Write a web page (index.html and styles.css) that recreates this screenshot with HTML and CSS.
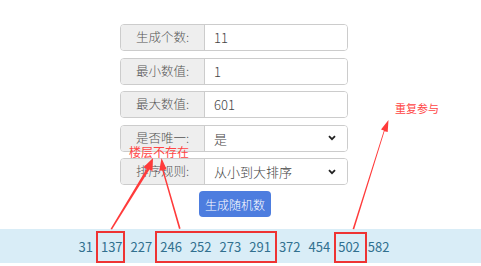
FILE: index.html
```html
<!DOCTYPE html>
<html lang="zh">
<head>
<meta charset="utf-8">
<link rel="stylesheet" href="styles.css">
</head>
<body>
<div class="page">
  <main class="form">
    <div class="group"><span class="addon">生成个数:</span><span class="field">11</span></div>
    <div class="group"><span class="addon">最小数值:</span><span class="field">1</span></div>
    <div class="group"><span class="addon">最大数值:</span><span class="field">601</span></div>
    <div class="group"><span class="addon">是否唯一:</span><span class="field select">是<svg class="chev" viewBox="0 0 8 6" width="8" height="6"><path d="M1 1.2 L4 4.2 L7 1.2" fill="none" stroke="#222" stroke-width="1.8"/></svg></span></div>
    <div class="group"><span class="addon">排序规则:</span><span class="field select">从小到大排序<svg class="chev" viewBox="0 0 8 6" width="8" height="6"><path d="M1 1.2 L4 4.2 L7 1.2" fill="none" stroke="#222" stroke-width="1.8"/></svg></span></div>
    <div class="actions"><button class="btn">生成随机数</button></div>
  </main>
  <div class="result">
    <span>31</span><span>137</span><span>227</span><span>246</span><span>252</span><span>273</span><span>291</span><span>372</span><span>454</span><span>502</span><span>582</span>
  </div>
</div>
<div class="note note-floor">楼层不存在</div>
<div class="note note-dup">重复参与</div>
<svg class="marks" width="481" height="266" viewBox="0 0 481 266">
  <g fill="none" stroke="#ee3333" stroke-width="2">
    <rect x="97" y="232" width="27" height="30"/>
    <rect x="156" y="232" width="120" height="30"/>
    <rect x="335" y="233" width="31" height="29"/>
  </g>
  <g fill="#ff3b3b">
    <polygon points="110.5,229 112,229.6 149.5,169.5 152.5,171.3 153,158 143.5,167.2 146.5,169"/>
    <polygon points="179,229 180.6,228.6 163.6,170 166.6,169.3 161.5,158 159.2,170.9 162.2,170.3"/>
    <polygon points="352.6,229 354.2,229.3 384.5,131.2 387.7,132.1 388.5,120 381,129.5 383.9,130.4"/>
  </g>
</svg>
</body>
</html>
```
FILE: styles.css
```css
* { box-sizing: border-box; }
html, body { margin: 0; padding: 0; background: #fff; }
body {
  width: 481px;
  height: 266px;
  overflow: hidden;
  position: relative;
  font-family: "Noto Sans CJK SC", "Noto Sans", sans-serif;
  font-size: 13px;
  color: #555;
}
.page { padding-top: 24px; }
.form {
  width: 228px;
  margin-left: 120px;
  display: flex;
  flex-direction: column;
  gap: 6.5px;
}
.group {
  display: flex;
  height: 27px;
  border: 1px solid #ccc;
  border-radius: 4px;
  overflow: hidden;
}
.addon {
  width: 84px;
  flex: none;
  background: #eee;
  border-right: 1px solid #ccc;
  display: flex;
  align-items: center;
  justify-content: center;
  color: #555;
  font-size: 12.5px;
  font-weight: 300;
  line-height: 1;
}
.field {
  flex: 1;
  display: flex;
  align-items: center;
  padding-left: 9px;
  padding-right: 11px;
  color: #444;
  background: #fff;
  font-weight: 300;
  line-height: 1;
}
.select { justify-content: space-between; }
.chev { display: block; }
.actions {
  display: flex;
  justify-content: center;
  padding-left: 2px;
  margin-top: -0.5px;
}
.btn {
  width: 72px;
  height: 26px;
  border: none;
  border-radius: 4px;
  background: #4d7ddf;
  color: #fff;
  font-family: inherit;
  font-size: 12px;
  font-weight: 300;
  padding: 0;
}
.result {
  margin-top: 12px;
  height: 34px;
  background: #d9edf7;
  display: flex;
  align-items: center;
  justify-content: center;
  gap: 8px;
  padding-right: 13px;
  color: #31708f;
  font-size: 13px;
}
.note {
  position: absolute;
  color: #ff4545;
  line-height: 1;
  white-space: nowrap;
}
.note-floor { left: 129px; top: 146px; font-size: 12px; }
.note-dup { left: 395px; top: 103px; font-size: 11px; }
.marks { position: absolute; left: 0; top: 0; pointer-events: none; }
```
